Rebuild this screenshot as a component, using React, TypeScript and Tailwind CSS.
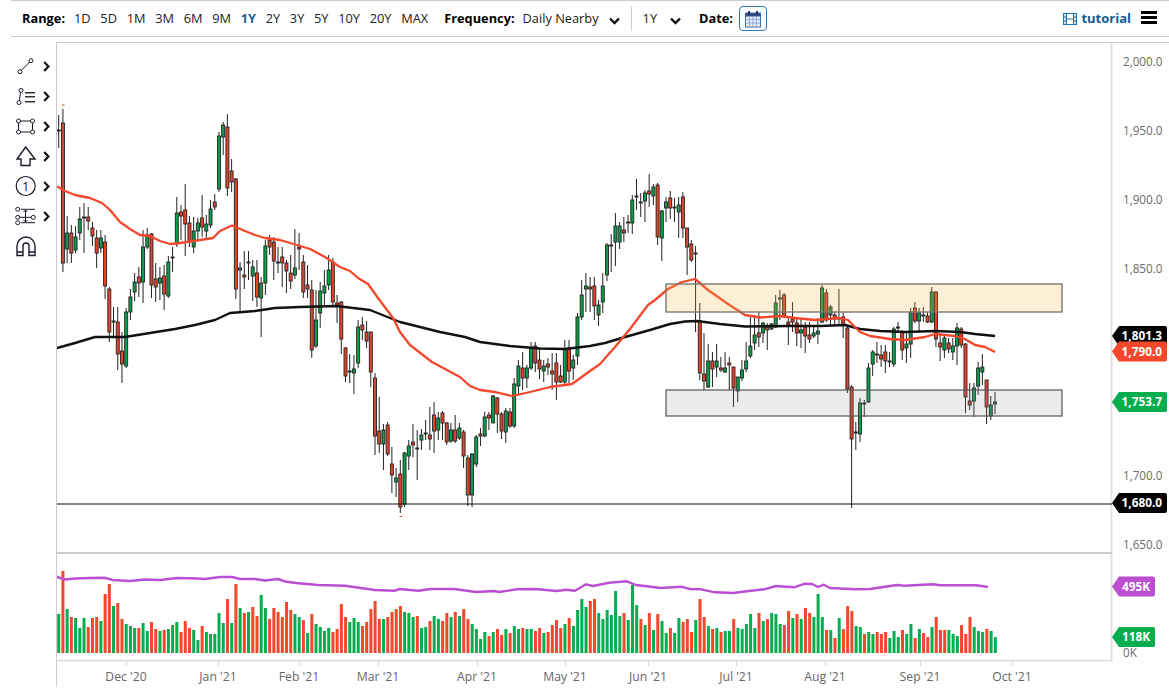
const FONT = "font-['Open_Sans','Noto_Sans',sans-serif]";

// [green?, bodyTop, bodyBottom, high, low], all in page pixels
const candles: number[][] = [
  [1,130,131,115,148],[0,123,263,109,272],[1,233,249,216,263],[0,233,253,225,263],[1,237,250,226,253],
  [1,219,233,207,240],[1,217,218,203,253],[0,217,221,207,230],[0,228,236,222,246],[0,238,253,230,268],
  [1,238,248,230,253],[0,242,286,235,299],[0,289,332,287,342],[1,321,322,307,338],[0,322,354,307,370],
  [0,351,364,332,383],[1,312,366,308,368],[1,297,312,289,320],[1,282,292,273,301],[0,277,283,267,297],
  [1,247,282,230,303],[1,235,247,228,249],[0,234,285,233,298],[0,279,287,263,302],[1,278,283,267,300],
  [0,276,294,265,310],[1,262,296,256,298],[1,257,258,247,272],[1,213,244,197,247],[0,212,216,205,240],
  [0,210,224,184,256],[0,223,242,216,247],[1,231,247,217,253],[1,223,231,218,240],[0,218,227,195,237],
  [1,224,231,215,240],[1,209,225,200,228],[0,202,207,194,210],[1,136,189,132,192],[1,125,137,122,155],
  [0,127,188,114,196],[0,171,182,159,192],[0,179,289,178,299],[1,268,270,262,313],[0,275,277,251,289],
  [1,262,263,251,280],[1,267,276,260,301],[0,273,297,260,307],[1,283,298,277,337],[1,246,283,240,295],
  [0,240,247,235,255],[0,242,261,237,280],[1,262,263,247,273],[0,257,263,247,287],[0,263,271,260,293],
  [0,273,281,255,289],[1,268,275,229,279],[0,247,249,233,270],[0,262,292,255,298],[0,285,289,265,298],
  [0,290,350,280,358],[1,320,346,290,348],[1,291,313,282,328],[1,286,293,270,305],[1,270,285,255,290],
  [0,262,302,258,305],[0,303,305,295,323],[0,302,339,301,354],[0,348,376,347,382],[1,371,372,354,383],
  [1,369,373,355,394],[1,327,363,320,368],[0,325,330,317,340],[0,332,341,321,348],[0,332,372,332,387],
  [0,378,436,373,455],[0,431,444,397,453],[1,430,444,424,470],[0,425,454,422,456],[0,464,475,447,493],
  [1,478,482,468,497],[0,474,507,460,513],[1,453,504,452,507],[1,446,456,440,470],[0,442,445,424,457],
  [1,448,449,430,480],[1,435,440,429,450],[1,433,434,420,440],[0,435,439,407,450],[0,415,431,402,453],
  [1,418,430,412,440],[0,413,423,411,440],[0,423,442,422,445],[1,430,441,423,443],[0,430,441,415,443],
  [1,428,438,423,440],[0,432,456,430,468],[0,458,495,455,506],[1,454,495,453,507],[1,437,464,435,467],
  [0,434,436,428,446],[1,417,436,412,437],[0,415,418,412,430],[1,396,423,395,423],[0,398,414,397,433],
  [0,414,431,412,439],[1,411,432,408,443],[0,412,426,408,428],[1,384,426,378,428],[1,366,386,360,395],
  [0,368,378,352,390],[1,368,378,365,388],[1,348,368,342,370],[0,346,363,342,372],[0,360,369,348,379],
  [1,366,371,360,382],[0,364,367,358,375],[0,371,374,353,390],[0,363,382,353,400],[0,376,382,365,383],
  [1,349,382,340,385],[0,348,371,340,383],[1,360,368,355,380],[1,317,356,313,365],[1,295,317,280,320],
  [1,286,289,273,312],[0,287,289,277,312],[0,286,306,277,320],[1,305,315,300,326],[1,286,302,273,313],
  [1,245,275,243,281],[1,245,246,234,272],[1,226,242,213,266],[1,226,242,222,249],[0,230,233,217,242],
  [1,222,223,215,233],[1,200,223,195,234],[1,196,197,179,210],[0,202,203,193,217],[1,193,201,190,222],
  [0,191,194,174,207],[1,187,196,184,205],[0,185,237,183,245],[1,211,238,210,261],[1,202,208,197,222],
  [0,198,208,191,219],[1,207,208,198,222],[1,205,212,197,238],[0,197,228,192,238],[0,228,247,228,275],
  [0,244,260,240,262],[1,253,254,246,332],[0,321,373,303,380],[0,374,381,333,390],[1,361,387,344,388],
  [0,361,369,352,387],[1,361,367,344,377],[0,368,370,357,372],[1,368,372,352,373],[0,363,365,357,390],
  [0,367,388,367,407],[1,377,391,377,402],[1,370,378,360,381],[1,361,369,342,372],[1,346,356,317,358],
  [1,335,343,315,350],[0,333,337,312,347],[1,323,333,322,343],[0,327,330,323,350],[1,324,329,323,330],
  [1,303,327,295,328],[1,298,299,290,320],[0,295,317,293,318],[0,322,325,317,345],[0,319,322,302,332],
  [0,323,333,318,346],[1,330,333,320,348],[0,327,336,322,353],[0,335,339,322,343],[1,333,336,325,338],
  [1,331,334,318,344],[1,288,322,285,323],[0,293,320,289,322],[1,307,315,305,325],[0,315,319,312,325],
  [1,318,319,289,325],[0,317,325,312,338],[0,328,389,327,393],[0,387,439,385,508],[1,432,433,422,450],
  [1,403,434,398,442],[1,403,404,400,417],[1,368,402,363,403],[1,352,364,350,376],[0,354,355,342,363],
  [0,355,359,345,367],[0,352,361,345,373],[1,361,362,352,367],[1,329,364,327,367],[1,327,328,322,333],
  [0,332,350,330,360],[1,344,348,332,363],[1,312,344,308,358],[0,308,321,302,323],[1,313,321,308,333],
  [1,315,316,307,322],[0,316,322,312,323],[1,292,322,287,323],[0,292,339,291,347],[0,343,347,335,361],
  [1,338,350,335,358],[0,343,349,338,353],[1,346,352,338,360],[1,328,346,323,365],[0,329,345,327,348],
  [0,344,397,343,413],[0,401,405,383,410],[1,388,401,383,417],[1,368,386,362,395],[1,367,372,354,385],
  [0,380,407,380,424],[1,405,416,396,420],[1,402,404,392,414],
];

// volume heights, negative means a red bar
const volumes = [
  39,-82,44,-36,35,25,35,-26,-35,-36,32,-59,-69,47,-50,-34,29,27,25,-25,30,22,-31,-24,22,-23,24,28,31,-21,-32,-25,23,13,-27,21,19,19,40,30,-54,30,-69,45,-40,41,-46,-37,58,45,-34,-45,-41,-36,-51,-43,39,36,
  -33,20,-39,29,26,22,25,-21,-24,-49,-36,31,35,31,-27,-31,-44,-52,-34,34,-36,-41,-44,-47,41,40,36,-37,25,26,-32,37,34,-32,-40,36,-41,37,-44,-34,29,24,14,21,-17,21,-24,-18,24,-20,27,24,-25,24,24,-22,-25,20,-21,-28,-33,-25,29,-35,27,43,54,46,-52,-54,40,34,43,38,62,37,-40,33,68,48,-34,28,-40,23,-39,32,20,-25,20,35,-31,-34,-21,33,-54,-36,27,-24,25,-21,22,22,-34,25,24,29,39,25,-40,32,-34,40,39,29,-28,-42,35,-39,34,-45,-40,36,59,36,-23,23,-15,35,-24,-47,-42,27,26,-19,21,19,-21,-19,-21,15,22,16,-23,19,29,-15,24,-20,-16,26,-36,-23,-23,23,19,17,-28,-19,-36,26,22,21,-24,22,16,
];

const redLine: number[][] = [
  [57,186.5],[65,191],[75,195],[90,198],[102,203],[110,210],[120,222],[130,229],[140,235],[150,236],[160,241],[170,244],[180,243],[200,240],[213,238],[220,231],[232,225.5],[245,231],[255,235],[265,238],[280,240],[297,245],[310,249],[325,257],[340,267],[350,271],[358,278],[368,284],[378,298],[393,318],[400,332],[410,345],[432,362],[460,377],[470,386],[480,390],[495,392],[512,396],[530,392],[550,387],[572,384],[590,371],[600,364],[615,347],[630,329],[648,305],[655,300],[668,289],[682,282],[695,279],[708,290],[728,304],[745,315],[760,317.5],[780,316],[795,318],[815,320],[840,318],[848,320],[860,332],[870,336],[890,339],[905,340],[925,337],[935,334],[955,336],[965,339],[975,345],[985,347],[995,352],
];

const blackLine: number[][] = [
  [57,348],[75,343],[95,337],[105,337],[125,337],[150,333],[175,329],[195,325],[215,320],[230,313],[255,311],[275,308],[300,307],[335,306],[345,307],[370,310],[380,314],[400,322],[440,332],[465,337],[480,342],[510,346],[540,348.5],[565,349],[590,346],[605,343],[625,337],[650,330],[670,324],[685,321.5],[697,321],[720,324],[745,326.5],[790,326],[820,326],[845,325],[860,329],[880,331],[905,332],[935,331],[960,332],[975,334],[995,336],
];

const purpleLine: number[][] = [
  [57,577],[65,579.5],[75,578.5],[90,578],[105,577.8],[113,580],[130,581],[145,579.5],[160,580],[177,578],[197,578.5],[205,579],[220,577],[232,577],[240,579],[255,579],[265,580.5],[278,579],[285,581.5],[296,583],[318,585],[345,585.7],[375,590],[395,590.7],[400,589],[418,590.7],[431,589],[454,589],[476,592],[494,591],[499,592],[517,589.3],[535,589],[557,591],[566,589.7],[575,590.7],[586,584.3],[593,586],[609,582.7],[627,581.3],[636,585],[661,588],[681,586.7],[690,589],[701,589.3],[715,592.3],[733,593],[751,590.7],[764,589.3],[776,586],[794,587.3],[805,583.7],[812,584],[818,587],[824,584.7],[830,588],[855,589.3],[870,589],[897,585],[904,585.7],[933,584.3],[940,585.3],[976,585.3],[988,587],
];

const priceTicks = [
  ["2,000.0", 62],["1,950.0", 131],["1,900.0", 200],["1,850.0", 269],["1,700.0", 476],["1,650.0", 545],
] as const;

const monthTicks = [
  ["Dec '20", 126],["Jan '21", 218],["Feb '21", 299],["Mar '21", 378],["Apr '21", 477],["May '21", 565],
  ["Jun '21", 648],["Jul '21", 736],["Aug '21", 825],["Sep '21", 920],["Oct '21", 1012],
] as const;

const ranges = ["1D","5D","1M","3M","6M","9M","1Y","2Y","3Y","5Y","10Y","20Y","MAX"];

function toPoints(line: number[][]) {
  return line.map((p) => p.join(",")).join(" ");
}

function ChevronDown() {
  return (
    <svg width="11" height="8" viewBox="0 0 11 8" className="mt-1">
      <path d="M1 1.5 5.5 6 10 1.5" fill="none" stroke="#111" strokeWidth="2.4" />
    </svg>
  );
}

function ChevronRight() {
  return (
    <svg width="7" height="11" viewBox="0 0 7 11">
      <path d="M1.2 1 5.4 5.5 1.2 10" fill="none" stroke="#111" strokeWidth="2.2" />
    </svg>
  );
}

function CalendarIcon() {
  return (
    <svg width="18" height="18" viewBox="0 0 18 18">
      <rect x="1.5" y="3" width="15" height="14" fill="#e6eefb" stroke="#4a6da8" />
      <rect x="1.5" y="3" width="15" height="3.5" fill="#2f4f86" />
      <path d="M5 1v4M13 1v4" stroke="#22395f" strokeWidth="2" />
      <path d="M1.5 9.5h15M1.5 13h15M5.5 6.5V17M9 6.5V17M12.5 6.5V17" stroke="#7d9bd0" strokeWidth="0.8" />
    </svg>
  );
}

function FilmIcon() {
  return (
    <svg width="14" height="12" viewBox="0 0 14 12">
      <rect x="0.5" y="0.5" width="13" height="11" fill="#cfe3f3" stroke="#1f74b0" />
      <rect x="3.5" y="0.5" width="7" height="11" fill="#fff" stroke="#1f74b0" />
      <path d="M.5 4h3M.5 8h3M10.5 4h3M10.5 8h3M3.5 6h7" stroke="#1f74b0" />
    </svg>
  );
}

function Dot({ x, y }: { x: number; y: number }) {
  return <circle cx={x} cy={y} r="2" fill="#fff" stroke="#1b1b2a" strokeWidth="1" />;
}

const tools = [
  <>
    <path d="M6 17.7 17 6.7" stroke="#1b1b2a" />
    <Dot x={6} y={17.7} />
    <Dot x={17} y={6.7} />
  </>,
  <>
    <path d="M7 6.5C6 10 6 14 5 18.5" fill="none" stroke="#1b1b2a" />
    <Dot x={7} y={6.5} />
    <Dot x={5} y={18.5} />
    <path d="M11 8.7h10M11 12.7h10M11 17.7h10" stroke="#333" strokeWidth="1.4" />
  </>,
  <>
    <path d="M4.5 7h14M4.5 7v11h14V7" fill="none" stroke="#1b1b2a" />
    <Dot x={4.5} y={7} />
    <Dot x={18.5} y={7} />
    <Dot x={4.5} y={18} />
    <Dot x={18.5} y={18} />
  </>,
  <path d="M11.7 3 3 15h4v6.5h9V15h5Z" fill="#fff" stroke="#1b1b2a" strokeWidth="1.4" />,
  <>
    <circle cx="11.7" cy="12" r="9.5" fill="none" stroke="#1b1b2a" strokeWidth="1.2" />
    <text x="11.7" y="16.5" textAnchor="middle" fontSize="13" fill="#1b1b2a">1</text>
  </>,
  <>
    <path d="M7 5.3h14M7 18.7h14M3.7 13.3h15.6" stroke="#1b1b2a" />
    <path d="M11.5 6v12M9.5 8l2-2 2 2M9.5 16l2 2 2-2" fill="none" stroke="#1b1b2a" />
    <Dot x={3.7} y={5.3} />
    <Dot x={3.7} y={13.3} />
    <Dot x={3.7} y={18.7} />
    <Dot x={19.3} y={13.3} />
  </>,
  <path d="M3 21.5V12a8.5 8.5 0 0 1 18 0v9.5h-6V12a3 3 0 0 0-6 0v9.5ZM3 18h6M15 18h6" fill="#fff" stroke="#1b1b2a" strokeWidth="1.4" />,
];

function TopBar() {
  return (
    <div className="ml-[11px] h-[37px] border-y border-[#ccc] flex items-center pl-[11px] text-[12.8px] text-[#222]">
      <span className="font-bold mr-[9px] text-black">Range:</span>
      <div className="flex gap-[9.7px]">
        {ranges.map((r) => (
          <span key={r} className={r === "1Y" ? "font-bold text-[#1f5f99]" : ""}>
            {r}
          </span>
        ))}
      </div>
      <span className="font-bold ml-[16px] text-black">Frequency:</span>
      <span className="ml-[8px]">Daily Nearby</span>
      <span className="ml-[10px]"><ChevronDown /></span>
      <div className="ml-[11px] h-[25px] w-px bg-[#ccc]" />
      <span className="ml-[11px]">1Y</span>
      <span className="ml-[13px]"><ChevronDown /></span>
      <span className="font-bold ml-[18px] text-black">Date:</span>
      <div className="ml-[6px] w-[28px] h-[25px] border border-[#2a77b5] rounded-sm flex items-center justify-center">
        <CalendarIcon />
      </div>
      <div className="ml-auto flex items-center">
        <FilmIcon />
        <span className="ml-[4px] font-bold text-[13px] text-[#0f5c99]">tutorial</span>
        <div className="ml-[10px] mr-[12px] mb-[3px] flex flex-col gap-[2px]">
          <div className="w-[16px] h-[3px] bg-black" />
          <div className="w-[16px] h-[3px] bg-black" />
          <div className="w-[16px] h-[3px] bg-black" />
        </div>
      </div>
    </div>
  );
}

function ToolRail() {
  return (
    <div className="w-[57px] h-[645px] shrink-0 border-r border-[#ccc] pt-[9px] flex flex-col self-start">
      {tools.map((icon, i) => (
        <div key={i} className="h-[30px] flex items-center pl-[14px]">
          <svg width="24" height="24" viewBox="0 0 24 24">{icon}</svg>
          {i < 6 && <span className="ml-[5px] flex"><ChevronRight /></span>}
        </div>
      ))}
    </div>
  );
}

function PriceTag({ y, label, color, right = 1167 }: { y: number; label: string; color: string; right?: number }) {
  const t = y - 10;
  const b = y + 10;
  return (
    <g>
      <path d={`M1112 ${y} L1119 ${t} H${right - 2} Q${right} ${t} ${right} ${t + 2} V${b - 2} Q${right} ${b} ${right - 2} ${b} H1119 Z`} fill={color} />
      <text x={right - 5} y={y + 4.2} textAnchor="end" fontSize="11.8" fontWeight="700" fill="#fff">
        {label}
      </text>
    </g>
  );
}

function Chart() {
  const step = (995 - 58.7) / (candles.length - 1);
  const volStep = (995.3 - 58.7) / (volumes.length - 1);
  return (
    <svg viewBox="57 42 1112 652" className="w-[1112px] h-[652px] block" fontFamily="'Open Sans','Noto Sans',sans-serif">
      <line x1="57" x2="1169" y1="42.5" y2="42.5" stroke="#ccc" />
      <rect x="1110.5" y="43" width="2" height="618" fill="#e2e2e2" />
      <rect x="57" y="552" width="1055" height="2" fill="#ccc" />
      <rect x="57" y="659.5" width="1055" height="2" fill="#e2e2e2" />

      {candles.map(([up, top, bottom, high, low], i) => {
        const x = 58.7 + i * step;
        return (
          <g key={i}>
            <line x1={x} x2={x} y1={high} y2={low} stroke="#222" strokeWidth="1" />
            <rect x={x - 1.5} y={top} width="3" height={bottom - top} fill={up ? "#08a04a" : "#ea4226"} stroke="#222" strokeWidth="0.9" />
          </g>
        );
      })}
      <path d="M62 105h2.5M399.5 516.5h2.5" stroke="#f4472b" strokeWidth="1" />

      <polyline points={toPoints(blackLine)} fill="none" stroke="#111" strokeWidth="2.4" strokeLinejoin="round" />
      <polyline points={toPoints(redLine)} fill="none" stroke="#f4472b" strokeWidth="2.3" strokeLinejoin="round" />

      <rect x="666" y="284" width="396" height="28" fill="#f8b446" fillOpacity="0.22" stroke="#7f7a70" strokeWidth="1.4" />
      <rect x="666" y="390" width="396" height="26" fill="#969696" fillOpacity="0.18" stroke="#555" strokeWidth="1.2" />
      <line x1="57" x2="1112" y1="504" y2="504" stroke="#111" strokeWidth="1.2" />

      {volumes.map((v, i) => (
        <rect key={i} x={58.7 + i * volStep - 1.5} y={653 - Math.abs(v)} width="3" height={Math.abs(v)} fill={v > 0 ? "#04ae4f" : "#f4472b"} />
      ))}
      <polyline points={toPoints(purpleLine)} fill="none" stroke="#bb4fd1" strokeWidth="2.4" strokeLinejoin="round" />

      {priceTicks.map(([label, y]) => (
        <text key={label} x="1162.5" y={y + 4} textAnchor="end" fontSize="11.7" fill="#6b6b6b">{label}</text>
      ))}
      <text x="1123" y="657" fontSize="11.7" fill="#6b6b6b">0K</text>

      {monthTicks.map(([label, x]) => (
        <g key={label}>
          <line x1={x + 0.5} x2={x + 0.5} y1="661" y2="666" stroke="#d8d8d8" />
          <text x={x} y="680.5" textAnchor="middle" fontSize="12.2" fill="#666">{label}</text>
        </g>
      ))}

      <PriceTag y={336} label="1,801.3" color="#000" />
      <PriceTag y={351.5} label="1,790.0" color="#f4472b" />
      <PriceTag y={402} label="1,753.7" color="#04ae4f" />
      <PriceTag y={503} label="1,680.0" color="#000" />
      <PriceTag y={586.5} label="495K" color="#bb4fd1" right={1155} />
      <PriceTag y={637} label="118K" color="#04ae4f" right={1155} />
    </svg>
  );
}

export default function App() {
  return (
    <div className={`w-[1169px] h-[694px] bg-white overflow-hidden ${FONT}`}>
      <TopBar />
      <div className="flex mt-[5px]">
        <ToolRail />
        <Chart />
      </div>
    </div>
  );
}
